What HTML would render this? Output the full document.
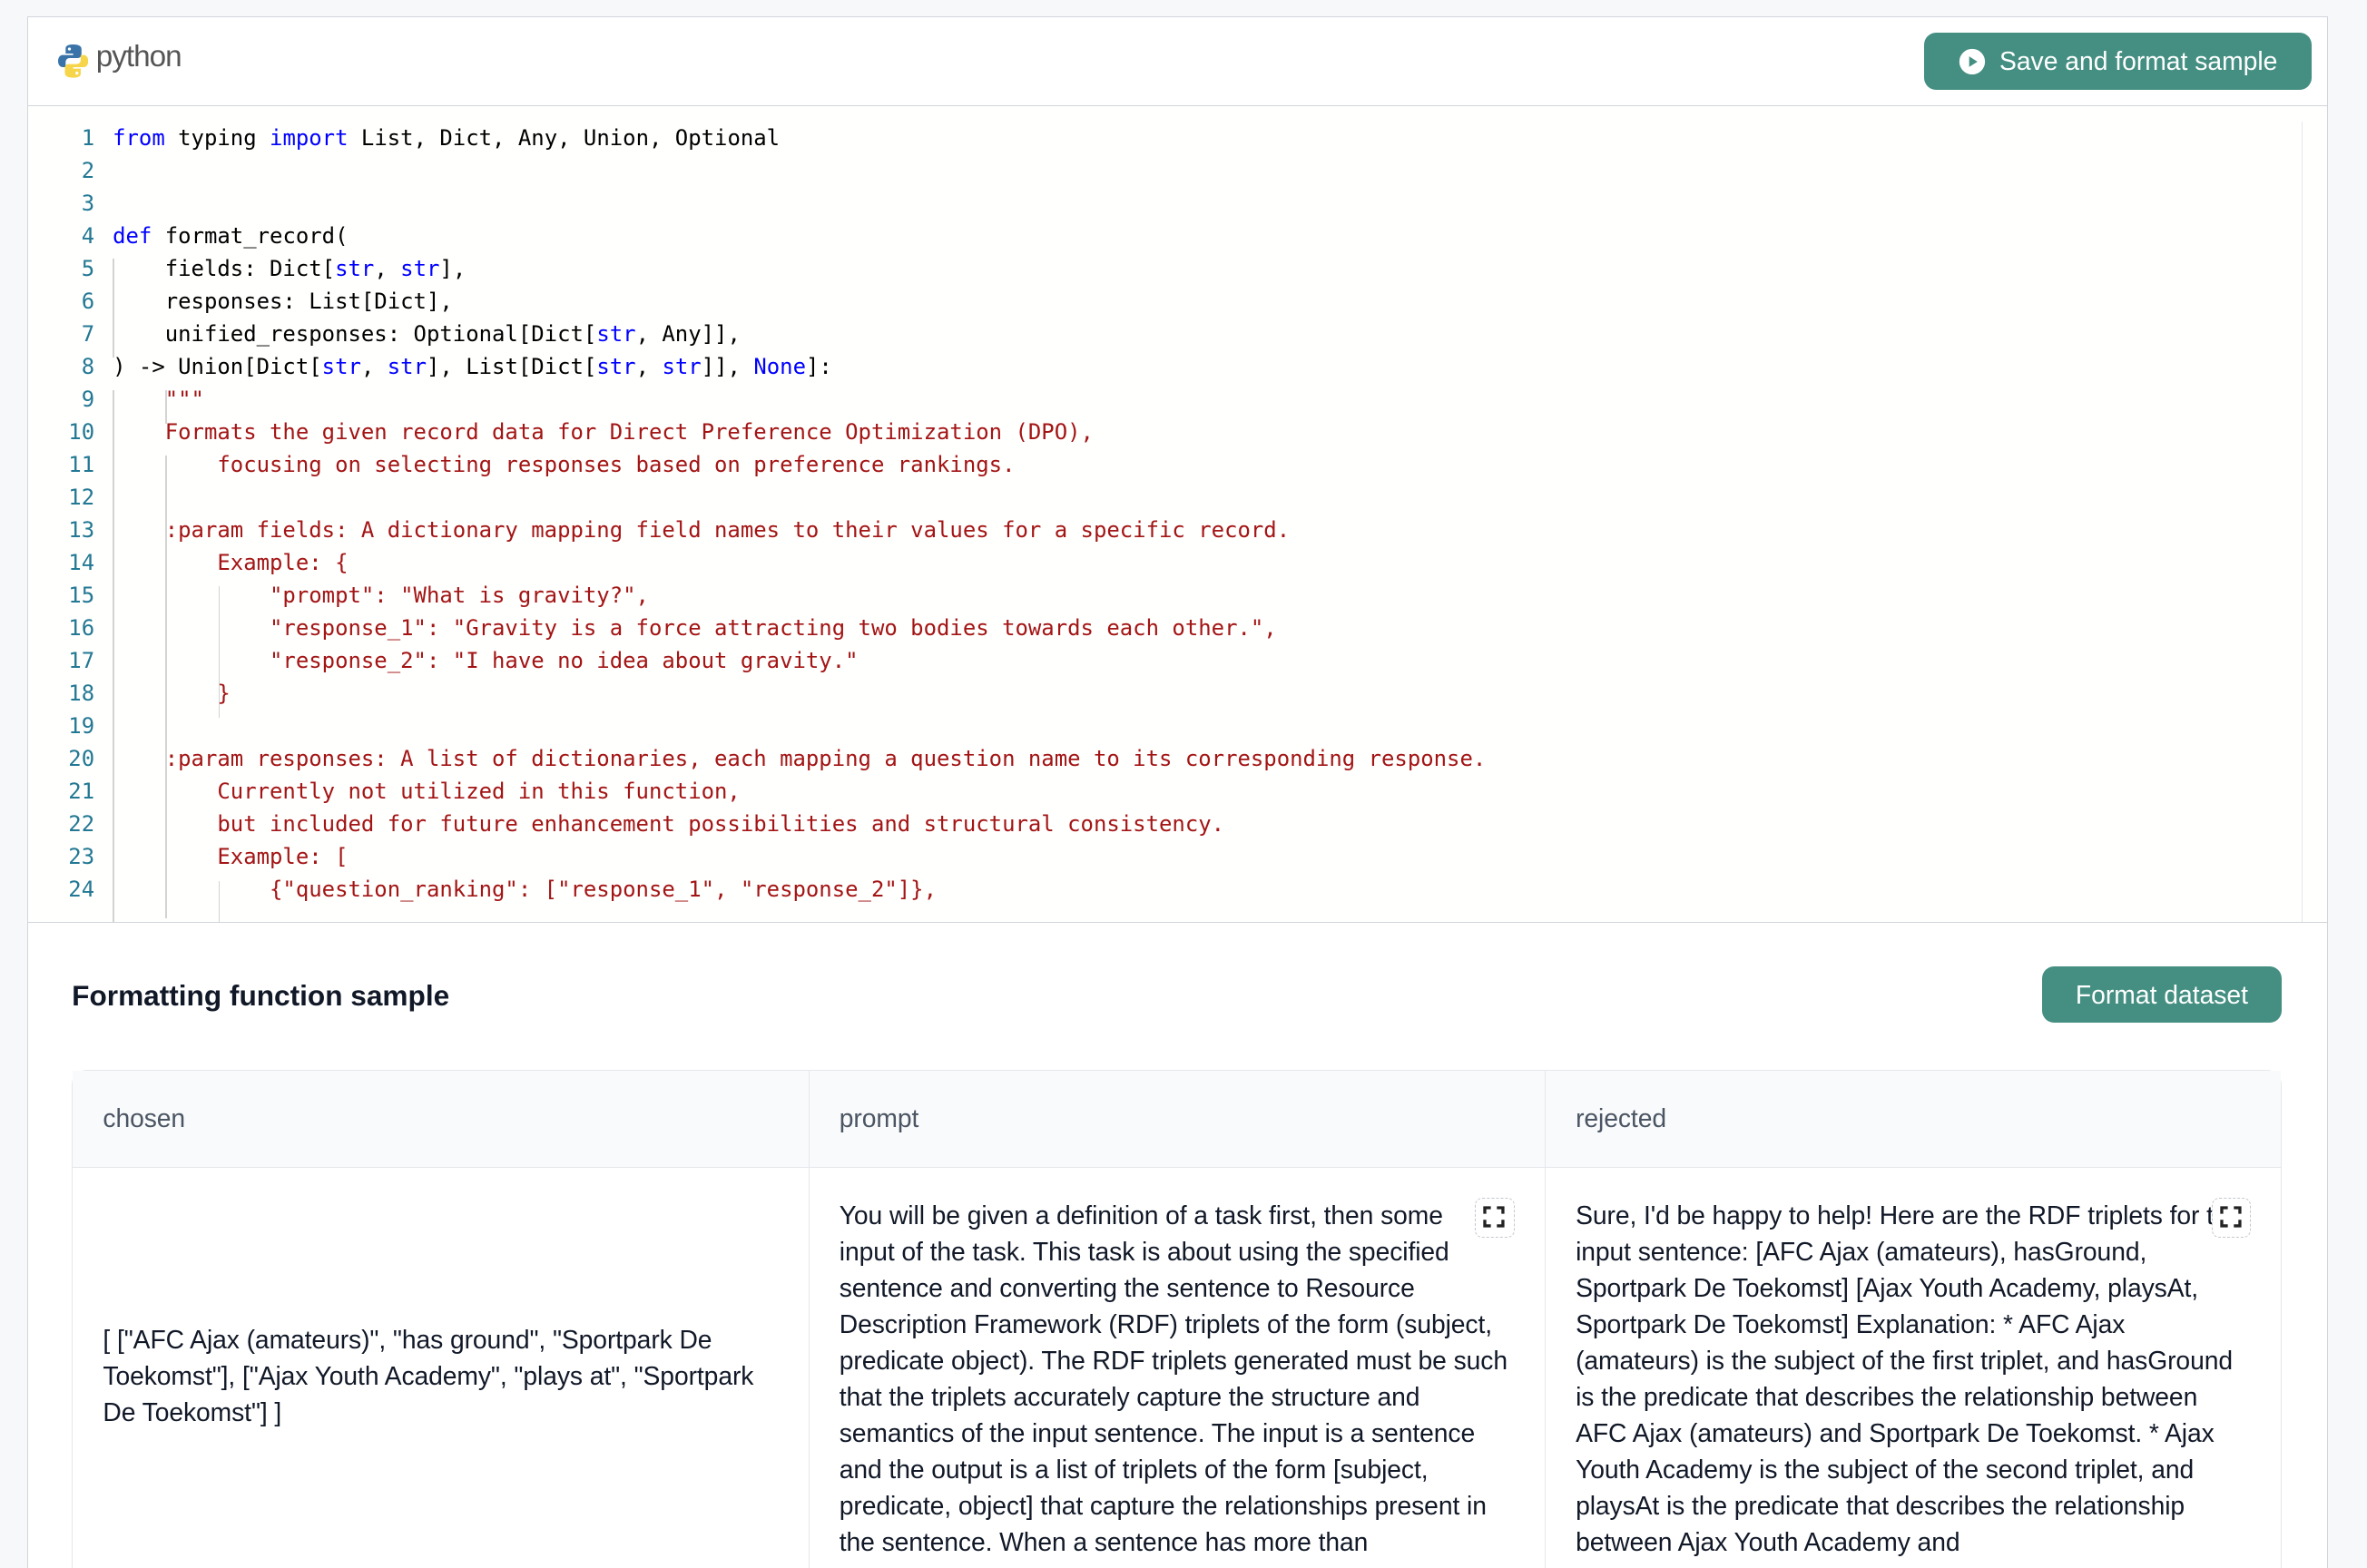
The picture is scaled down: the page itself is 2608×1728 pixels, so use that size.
<!DOCTYPE html>
<html style="overflow:hidden;height:1728px"><head><meta charset="utf-8"><style>
html,body{margin:0;padding:0}
body{width:1568px;height:1039px;overflow:hidden;background:#f7f8fa;zoom:1.66327;font-family:"Liberation Sans",sans-serif;position:relative}
.panel{position:absolute;left:18px;top:11px;width:1523px;height:1028px;background:#fff;border:1px solid #d1d5db;border-bottom:none;overflow:hidden}
.hdr{height:58px;border-bottom:1px solid #d1d5db;position:relative}
.logo{position:absolute;left:20px;top:18px}
.pytxt{position:absolute;left:45px;top:15px;font-size:20px;color:#555;letter-spacing:-0.6px}
.btn{position:absolute;background:#448f82;color:#fff;border-radius:8px;font-size:17px;display:flex;align-items:center;justify-content:center}
.code{position:absolute;left:0;top:59px;width:1523px;height:540px;border-bottom:1px solid #d1d5db;background:#fffffe;overflow:hidden}
.ln{position:absolute;left:0;width:44px;text-align:right;color:#237893;font-family:"DejaVu Sans Mono",monospace;font-size:14.4px}
.cl{position:absolute;left:56px;white-space:pre;font-family:"DejaVu Sans Mono",monospace;font-size:14.4px;color:#000}
.k{color:#0000ff}.s{color:#a31515}
.g{position:absolute;width:1px;background:#d3d3d3}
table{position:absolute;left:29px;top:697px;width:1464px;border-collapse:separate;border-spacing:0;border:1px solid #e5e7eb;border-radius:10px;font-size:17px;color:#111827;letter-spacing:-0.05px}
th{background:#f9fafb;height:64px;text-align:left;font-weight:normal;color:#4b5563;padding:0 20px;border-bottom:1px solid #e5e7eb;width:447px}
td{vertical-align:top;padding:20px 20px 0;line-height:24px;height:260px;position:relative}
th+th,td+td{border-left:1px solid #e5e7eb}
.ex{position:absolute;right:20px;top:20px;width:26px;height:26px;border:1px dashed #c4c8ce;border-radius:5px;background:#fff;box-sizing:border-box}
.sp{float:right;width:32px;height:20px}
</style></head><body>
<div class="panel">
 <div class="hdr">
  <svg class="logo" width="20" height="22" viewBox="0 0 20 22"><path d="M10 0C5 0 5 2 5 3v3h5v1H3C1 7 0 9 0 11s1 4 3 4h2v-3c0-2 1-3 3-3h5c1.5 0 2.5-1 2.5-2.5V3c0-2-2-3-5.5-3z" fill="#3a73a8"/><path d="M10 22c5 0 5-2 5-3v-3h-5v-1h7c2 0 3-2 3-4s-1-4-3-4h-2v3c0 2-1 3-3 3H7c-1.5 0-2.5 1-2.5 2.5V19c0 2 2 3 5.5 3z" fill="#f7d54a"/><circle cx="7.5" cy="3" r="1" fill="#fff"/><circle cx="12.5" cy="19" r="1" fill="#fff"/></svg>
  <div class="pytxt">python</div>
  <div class="btn" style="left:1256px;top:10px;width:257px;height:38px"><svg width="18" height="18" viewBox="0 0 18 18" style="margin-right:9px"><circle cx="9" cy="9" r="8.5" fill="#fff"/><path d="M7 5.5v7l5.5-3.5z" fill="#448f82"/></svg>Save and format sample</div>
 </div>
 <div class="code">
  <div style="position:absolute;left:1506px;top:10px;width:1px;height:530px;background:#e5e7eb"></div>
  <div class="g" style="left:56px;top:101px;height:65px"></div>
  <div class="g" style="left:91px;top:231px;height:307px"></div>
  <div class="g" style="left:91px;top:188px;height:22px"></div>
  <div class="g" style="left:56px;top:188px;height:355px"></div>
  <div class="g" style="left:126px;top:318px;height:87px"></div>
  <div class="g" style="left:126px;top:513px;height:30px"></div>
  <div id="lines"></div>
 </div>
 <div style="position:absolute;left:29px;top:637px;font-size:19px;font-weight:bold;color:#111827">Formatting function sample</div>
 <div class="btn" style="left:1334px;top:629px;width:159px;height:37px">Format dataset</div>
 <table><tr><th>chosen</th><th>prompt</th><th>rejected</th></tr>
 <tr><td style="padding-top:102px">[ ["AFC Ajax (amateurs)", "has ground", "Sportpark De Toekomst"], ["Ajax Youth Academy", "plays at", "Sportpark De Toekomst"] ]</td>
 <td><div class="ex"><svg width="24" height="24" viewBox="0 0 24 24"><path d="M6 10V6h4M14 6h4v4M18 14v4h-4M10 18H6v-4" fill="none" stroke="#222" stroke-width="2"/></svg></div><span class="sp"></span>You will be given a definition of a task first, then some input of the task. This task is about using the specified sentence and converting the sentence to Resource Description Framework (RDF) triplets of the form (subject, predicate object). The RDF triplets generated must be such that the triplets accurately capture the structure and semantics of the input sentence. The input is a sentence and the output is a list of triplets of the form [subject, predicate, object] that capture the relationships present in the sentence. When a sentence has more than</td>
 <td><div class="ex"><svg width="24" height="24" viewBox="0 0 24 24"><path d="M6 10V6h4M14 6h4v4M18 14v4h-4M10 18H6v-4" fill="none" stroke="#222" stroke-width="2"/></svg></div>Sure, I'd be happy to help! Here are the RDF triplets for the input sentence: [AFC Ajax (amateurs), hasGround, Sportpark De Toekomst] [Ajax Youth Academy, playsAt, Sportpark De Toekomst] Explanation: * AFC Ajax (amateurs) is the subject of the first triplet, and hasGround is the predicate that describes the relationship between AFC Ajax (amateurs) and Sportpark De Toekomst. * Ajax Youth Academy is the subject of the second triplet, and playsAt is the predicate that describes the relationship between Ajax Youth Academy and</td></tr></table>
</div>
<script>
var L=['<span class="k">from</span> typing <span class="k">import</span> List, Dict, Any, Union, Optional','','',
'<span class="k">def</span> format_record(',
'    fields: Dict[<span class="k">str</span>, <span class="k">str</span>],',
'    responses: List[Dict],',
'    unified_responses: Optional[Dict[<span class="k">str</span>, Any]],',
') -> Union[Dict[<span class="k">str</span>, <span class="k">str</span>], List[Dict[<span class="k">str</span>, <span class="k">str</span>]], <span class="k">None</span>]:',
'<span class="s">    """</span>',
'<span class="s">    Formats the given record data for Direct Preference Optimization (DPO),</span>',
'<span class="s">        focusing on selecting responses based on preference rankings.</span>',
'',
'<span class="s">    :param fields: A dictionary mapping field names to their values for a specific record.</span>',
'<span class="s">        Example: {</span>',
'<span class="s">            "prompt": "What is gravity?",</span>',
'<span class="s">            "response_1": "Gravity is a force attracting two bodies towards each other.",</span>',
'<span class="s">            "response_2": "I have no idea about gravity."</span>',
'<span class="s">        }</span>',
'',
'<span class="s">    :param responses: A list of dictionaries, each mapping a question name to its corresponding response.</span>',
'<span class="s">        Currently not utilized in this function,</span>',
'<span class="s">        but included for future enhancement possibilities and structural consistency.</span>',
'<span class="s">        Example: [</span>',
'<span class="s">            {"question_ranking": ["response_1", "response_2"]},</span>'];
var h='';for(var i=0;i<L.length;i++){var t=12.5+i*21.65;h+='<div class="ln" style="top:'+t+'px">'+(i+1)+'</div><div class="cl" style="top:'+t+'px">'+L[i]+'</div>';}
document.getElementById('lines').innerHTML=h;
</script>
</body></html>
